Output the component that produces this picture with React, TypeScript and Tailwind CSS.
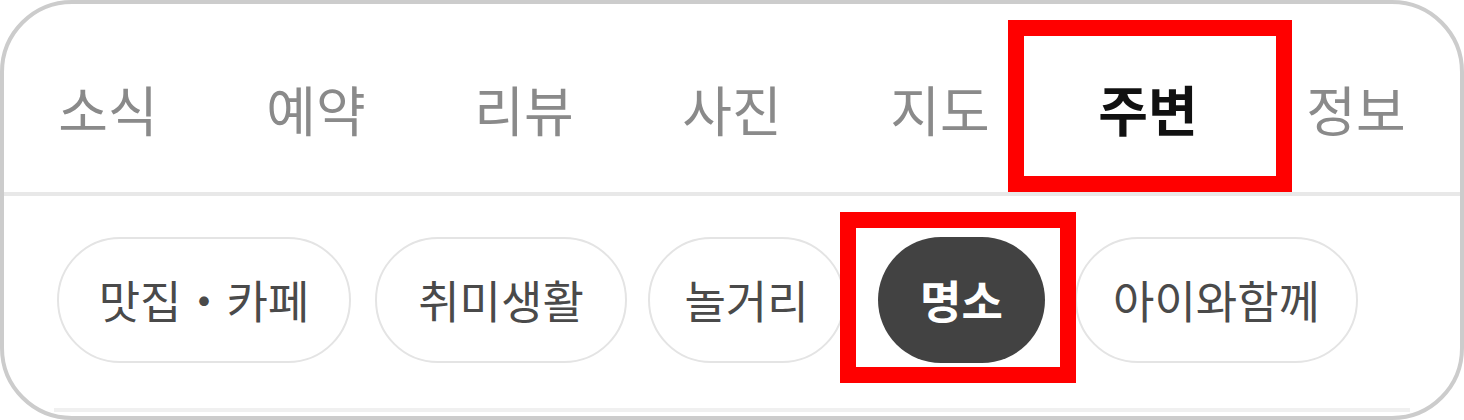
const tabs = ["소식", "예약", "리뷰", "사진", "지도", "주변", "정보"];

const chips = [
  { label: "맛집・카페", cls: "w-[294px]" },
  { label: "취미생활", cls: "w-[252px] ml-[24px]" },
  { label: "놀거리", cls: "w-[197px] ml-[21px]" },
  { label: "명소", cls: "w-[167px] ml-[33px]", active: true },
  { label: "아이와함께", cls: "w-[283px] ml-[30px]" },
];

export default function App() {
  return (
    <main
      className="relative w-[1464px] h-[420px] bg-white overflow-hidden"
      style={{ fontFamily: '"Noto Sans CJK KR", "Noto Sans", sans-serif' }}
    >
      <div className="h-full w-full rounded-[72px] border-4 border-[#cccccc] bg-white overflow-hidden flex flex-col">
        {/* Tabs */}
        <div className="flex h-[188px] pt-[20px]">
          {tabs.map((t) => (
            <div
              key={t}
              className={
                t === "주변"
                  ? "flex-1 flex items-center justify-center text-[54px] font-bold text-[#111111]"
                  : "flex-1 flex items-center justify-center text-[54px] text-[#8a8a8a]"
              }
            >
              {t}
            </div>
          ))}
        </div>
        <div className="h-[4px] bg-[#e8e8e8]" />

        {/* Category chips */}
        <div className="flex pl-[53px] pt-[41px]">
          {chips.map((c) => (
            <div
              key={c.label}
              className={
                c.active
                  ? `${c.cls} h-[126px] rounded-full bg-[#424242] flex items-center justify-center text-[45px] font-bold text-white`
                  : `${c.cls} h-[126px] rounded-full border-2 border-[#e4e4e4] bg-white flex items-center justify-center text-[45px] text-[#4a4a4a]`
              }
            >
              {c.label}
            </div>
          ))}
        </div>
        <div className="mt-auto mb-[4px] mx-[50px] h-[4px] bg-[#f0f0f0]" />
      </div>

      {/* annotation boxes */}
      <div className="absolute left-[1008px] top-[20px] w-[284px] h-[172px] border-[16px] border-[#ff0000]" />
      <div className="absolute left-[840px] top-[212px] w-[236px] h-[171px] border-[16px] border-[#ff0000]" />
    </main>
  );
}
